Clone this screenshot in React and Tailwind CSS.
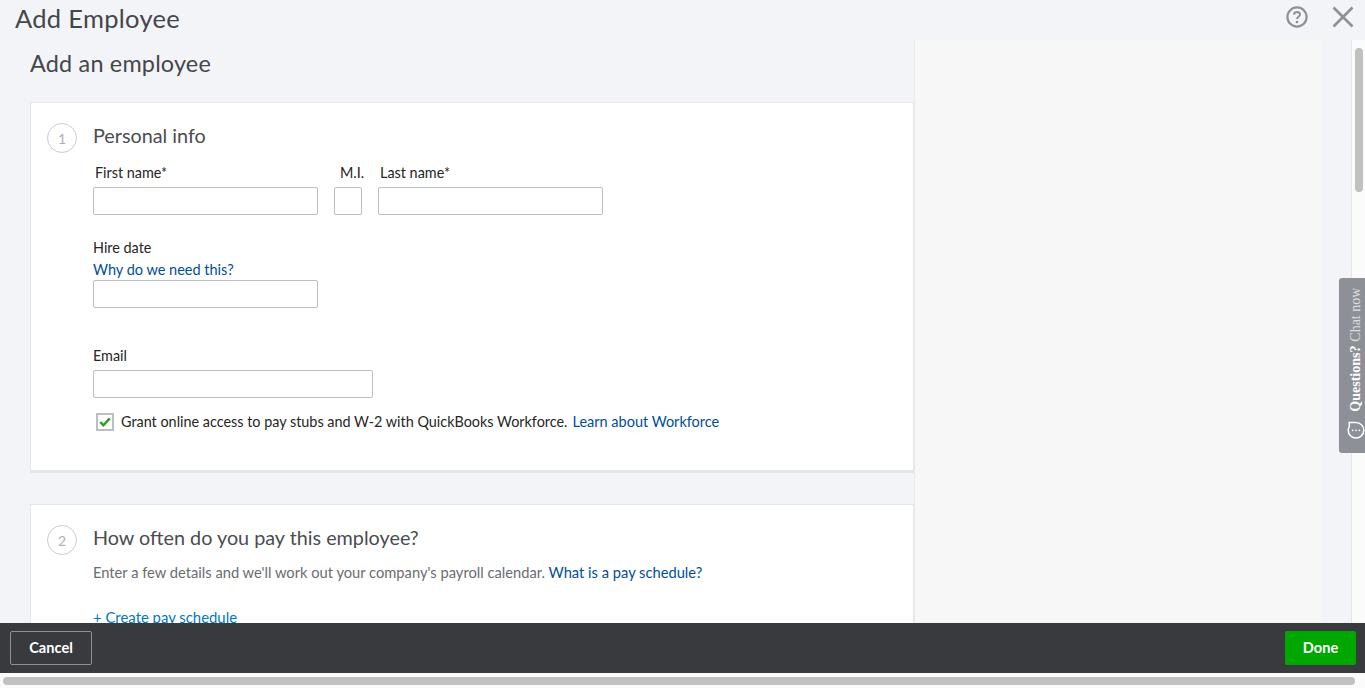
import React from "react";

const Label = ({ className = "", children }) => (
  <div className={`text-[14.4px] leading-[20px] text-[#262626] ${className}`}>{children}</div>
);
const Input = ({ className = "" }) => (
  <input className={`block h-[28px] rounded-[2px] border border-[#babec5] bg-white ${className}`} />
);
const Step = ({ n }) => (
  <div className="flex h-[30px] w-[30px] shrink-0 items-center justify-center rounded-full border border-[#c9ccd3] text-[14px] text-[#aeb1b7]">
    {n}
  </div>
);

export default function App() {
  return (
    <div className="relative flex h-[688px] w-[1365px] flex-col overflow-hidden bg-[#f3f4f8] font-['Lato','Noto_Sans',sans-serif]">
      <header className="flex h-[40px] shrink-0 items-center justify-between pb-[4px]">
        <h1 className="pl-[15px] text-[25.5px] leading-[36px] tracking-[0.3px] text-[#45464a]">Add Employee</h1>
        <div className="mb-[2px] flex items-center gap-[24px] pr-[11px]">
          <svg width="22" height="22" viewBox="0 0 22 22" fill="none">
            <circle cx="11" cy="11" r="9.6" stroke="#8d9096" strokeWidth="2.2" />
            <path d="M8 8.8c0-1.8 1.3-2.8 3-2.8s3 1 3 2.5c0 2.3-3 2.2-3 4.4" stroke="#8d9096" strokeWidth="2" fill="none" />
            <circle cx="11" cy="16" r="1.3" fill="#8d9096" />
          </svg>
          <svg width="22" height="22" viewBox="0 0 22 22" fill="none">
            <path d="M1.5 1.5 20.5 20.5M20.5 1.5 1.5 20.5" stroke="#8d9096" strokeWidth="2.6" />
          </svg>
        </div>
      </header>

      <div className="flex min-h-0 flex-1">
        <main className="w-[915px] shrink-0 overflow-hidden border-r border-[#e9eaee] pl-[30px]">
          <h2 className="h-[62px] pt-[8px] text-[23.4px] leading-[30px] tracking-[0.2px] text-[#45464a]">Add an employee</h2>

          <section className="h-[371px] border border-b-[3px] border-[#e3e5e9] bg-white pl-[16px] pt-[17px]">
            <div className="flex items-start gap-[16px]">
              <div className="pt-[3px]"><Step n="1" /></div>
              <div className="flex-1">
                <div className="text-[19.8px] leading-[30px] text-[#4b4c50]">Personal info</div>
                <div className="mt-[13px] flex">
                  <div className="w-[241px]">
                    <Label className="pl-[2px]">First name*</Label>
                    <Input className="mt-[4px] w-[225px]" />
                  </div>
                  <div className="w-[44px]">
                    <Label className="pl-[6px]">M.I.</Label>
                    <Input className="mt-[4px] w-[28px]" />
                  </div>
                  <div>
                    <Label className="pl-[2px]">Last name*</Label>
                    <Input className="mt-[4px] w-[225px]" />
                  </div>
                </div>
                <Label className="mt-[23px]">Hire date</Label>
                <a className="mt-[2px] block text-[14.5px] leading-[20px] text-[#004e9a]">Why do we need this?</a>
                <Input className="w-[225px]" />
                <Label className="mt-[38px]">Email</Label>
                <Input className="mt-[4px] w-[280px]" />
                <div className="mt-[14px] flex items-center pl-[3px]">
                  <span className="flex h-[18px] w-[18px] items-center justify-center border-2 border-[#babec5] bg-white">
                    <svg width="12" height="10" viewBox="0 0 12 10" fill="none">
                      <path d="M1.2 5 4.4 8.2 10.8 1.4" stroke="#2ca01c" strokeWidth="2.4" />
                    </svg>
                  </span>
                  <span className="ml-[7px] text-[14.4px] leading-[20px] text-[#262626]">
                    Grant online access to pay stubs and W-2 with QuickBooks Workforce.
                  </span>
                  <a className="ml-[5px] text-[14.5px] leading-[20px] text-[#004e9a]">Learn about Workforce</a>
                </div>
              </div>
            </div>
          </section>

          <section className="mt-[31px] h-[200px] border border-[#e3e5e9] bg-white pl-[16px] pt-[17px]">
            <div className="flex items-start gap-[16px]">
              <div className="pt-[3px]"><Step n="2" /></div>
              <div className="flex-1">
                <div className="text-[19.8px] leading-[30px] text-[#4b4c50]">How often do you pay this employee?</div>
                <div className="mt-[10px] text-[14.7px] leading-[20px] text-[#6b6c72]">
                  Enter a few details and we'll work out your company's payroll calendar.{" "}
                  <a className="text-[#004e9a]">What is a pay schedule?</a>
                </div>
                <a className="mt-[25px] block text-[14.9px] leading-[20px] text-[#0077c5]">+ Create pay schedule</a>
              </div>
            </div>
          </section>
        </main>

        <aside className="w-[406px] shrink-0 bg-[#f7f7f7]" />
        <div className="w-[30px] shrink-0" />
        <div className="flex w-[14px] shrink-0 justify-center border-l border-[#e3e5e9] bg-[#fbfbfb] pl-[1px] pt-[8px]">
          <div className="h-[144px] w-[8px] rounded-full bg-[#c1c1c1]" />
        </div>
      </div>

      <footer className="flex h-[50px] shrink-0 items-center justify-between bg-[#393a3d] px-[10px] pr-[9px]">
        <button className="h-[34px] w-[82px] rounded-[2px] border border-[#8d9096] text-[14.6px] font-bold text-white">Cancel</button>
        <button className="h-[34px] w-[71px] rounded-[2px] bg-[#00a700] text-[14.6px] font-bold text-white">Done</button>
      </footer>
      <div className="flex h-[15px] shrink-0 items-center bg-[#fbfbfb] px-[3px]">
        <div className="h-[8px] w-[1352px] rounded-full bg-[#c1c1c1]" />
      </div>

      <div className="absolute left-[1339px] top-[278px] flex h-[175px] w-[26px] flex-col items-center justify-between rounded-l-[3px] bg-[#8d9096] pb-[13px] pl-[8px] pt-[10px]">
        <span className="font-['Liberation_Serif',serif] text-[14px] leading-[18px] text-white [transform:rotate(180deg)] [writing-mode:vertical-rl]">
          <b>Questions?</b> <span className="opacity-70">Chat now</span>
        </span>
        <svg width="18" height="20" viewBox="0 0 18 20" fill="none">
          <path d="M9 2.5a7.8 7.8 0 1 1-7.8 7.8c0-1.8.6-3 1.2-4L2.2 2.5z" stroke="#fff" strokeWidth="1.5" />
          <circle cx="5.6" cy="10.3" r="0.9" fill="#fff" />
          <circle cx="9" cy="10.3" r="0.9" fill="#fff" />
          <circle cx="12.4" cy="10.3" r="0.9" fill="#fff" />
        </svg>
      </div>
    </div>
  );
}
